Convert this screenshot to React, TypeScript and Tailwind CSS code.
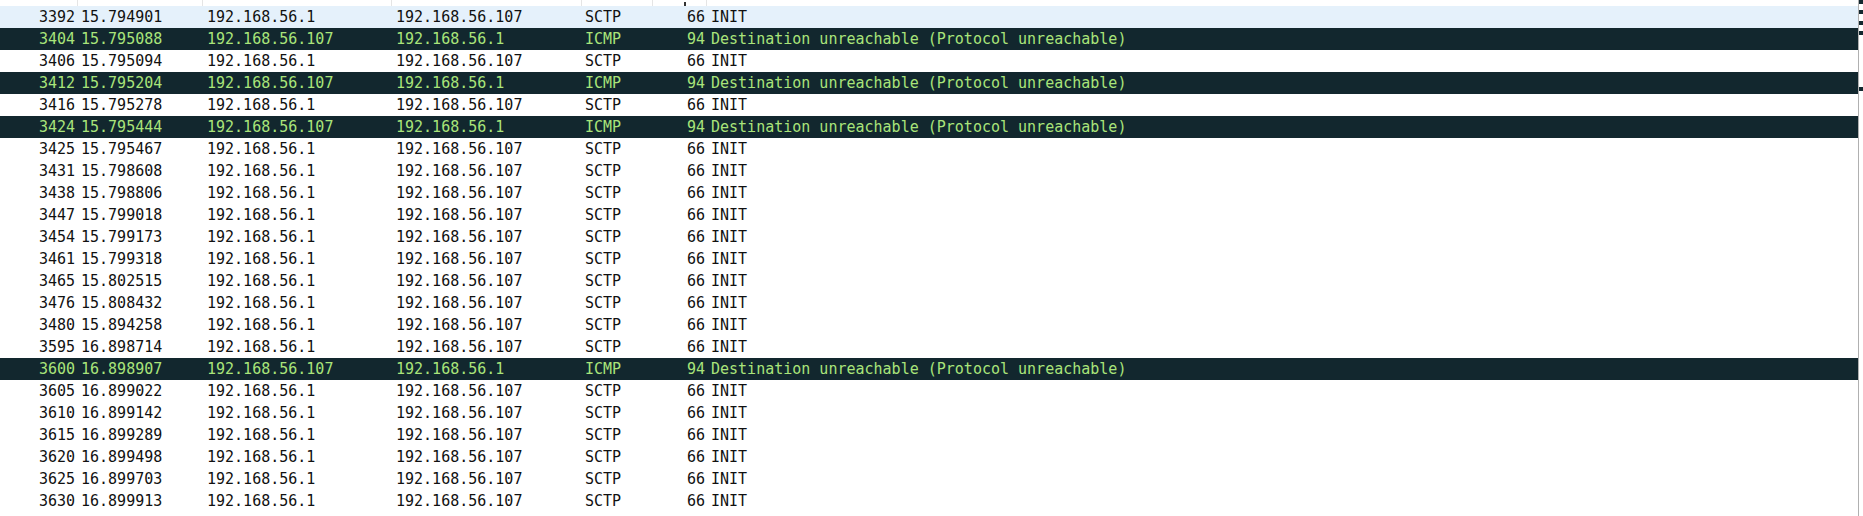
import React from 'react';

type Packet = {
  no: number;
  time: string;
  src: string;
  dst: string;
  proto: 'SCTP' | 'ICMP';
  len: number;
  info: string;
};

const A = '192.168.56.1';
const B = '192.168.56.107';
const UNREACH = 'Destination unreachable (Protocol unreachable)';

const init = (no: number, time: string): Packet => ({ no, time, src: A, dst: B, proto: 'SCTP', len: 66, info: 'INIT' });
const icmp = (no: number, time: string): Packet => ({ no, time, src: B, dst: A, proto: 'ICMP', len: 94, info: UNREACH });

const PACKETS: Packet[] = [
  init(3392, '15.794901'),
  icmp(3404, '15.795088'),
  init(3406, '15.795094'),
  icmp(3412, '15.795204'),
  init(3416, '15.795278'),
  icmp(3424, '15.795444'),
  init(3425, '15.795467'),
  init(3431, '15.798608'),
  init(3438, '15.798806'),
  init(3447, '15.799018'),
  init(3454, '15.799173'),
  init(3461, '15.799318'),
  init(3465, '15.802515'),
  init(3476, '15.808432'),
  init(3480, '15.894258'),
  init(3595, '16.898714'),
  icmp(3600, '16.898907'),
  init(3605, '16.899022'),
  init(3610, '16.899142'),
  init(3615, '16.899289'),
  init(3620, '16.899498'),
  init(3625, '16.899703'),
  init(3630, '16.899913'),
];

const SELECTED = 3392;

// minimap ticks (y offsets, px) for ICMP error packets
const MINIMAP_MARKS = [0, 10, 21, 31, 87];

const GRID = 'grid grid-cols-[78px_125px_189px_190px_71px_54px_1fr]';

function PacketRow({ p }: { p: Packet }) {
  const isErr = p.proto === 'ICMP';
  const selected = p.no === SELECTED;
  const rowCls = isErr
    ? 'bg-[#12272e] text-[#a9e47a]'
    : selected
    ? 'bg-[#e5f1fb] text-[#111]'
    : 'bg-white text-[#111]';

  return (
    <div className={`${GRID} h-[22px] items-center whitespace-nowrap ${rowCls}`}>
      <span className="pr-[3px] text-right">{p.no}</span>
      <span className="pl-[3px]">{p.time}</span>
      <span className="pl-[4px]">{p.src}</span>
      <span className="pl-[4px]">{p.dst}</span>
      <span className="pl-[3px]">{p.proto}</span>
      <span className="pr-[2px] text-right">{p.len}</span>
      <span className="pl-[4px]">{p.info}</span>
    </div>
  );
}

export default function App() {
  return (
    <div className="flex h-[516px] w-full overflow-hidden bg-white font-['DejaVu_Sans_Mono',monospace] text-[15px] leading-[22px]">
      <div className="flex min-w-0 flex-1 flex-col">
        {/* tail of the column header */}
        <div className={`${GRID} h-[6px] bg-white`}>
          <span className="border-r border-[#e5e5e5]" />
          <span className="border-r border-[#e5e5e5]" />
          <span className="border-r border-[#e5e5e5]" />
          <span className="border-r border-[#e5e5e5]" />
          <span className="border-r border-[#e5e5e5]" />
          <span className="relative border-r border-[#e5e5e5]">
            <span className="absolute left-[31px] top-[2px] h-[4px] w-[2px] bg-[#333]" />
          </span>
          <span />
        </div>
        {PACKETS.map((p) => (
          <PacketRow key={p.no} p={p} />
        ))}
      </div>
      <div className="relative w-[5px] border-l border-[#b0b0b0] bg-white">
        {MINIMAP_MARKS.map((y) => (
          <span key={y} className="absolute left-0 h-[4px] w-[4px] bg-[#12272e]" style={{ top: y }} />
        ))}
      </div>
    </div>
  );
}
